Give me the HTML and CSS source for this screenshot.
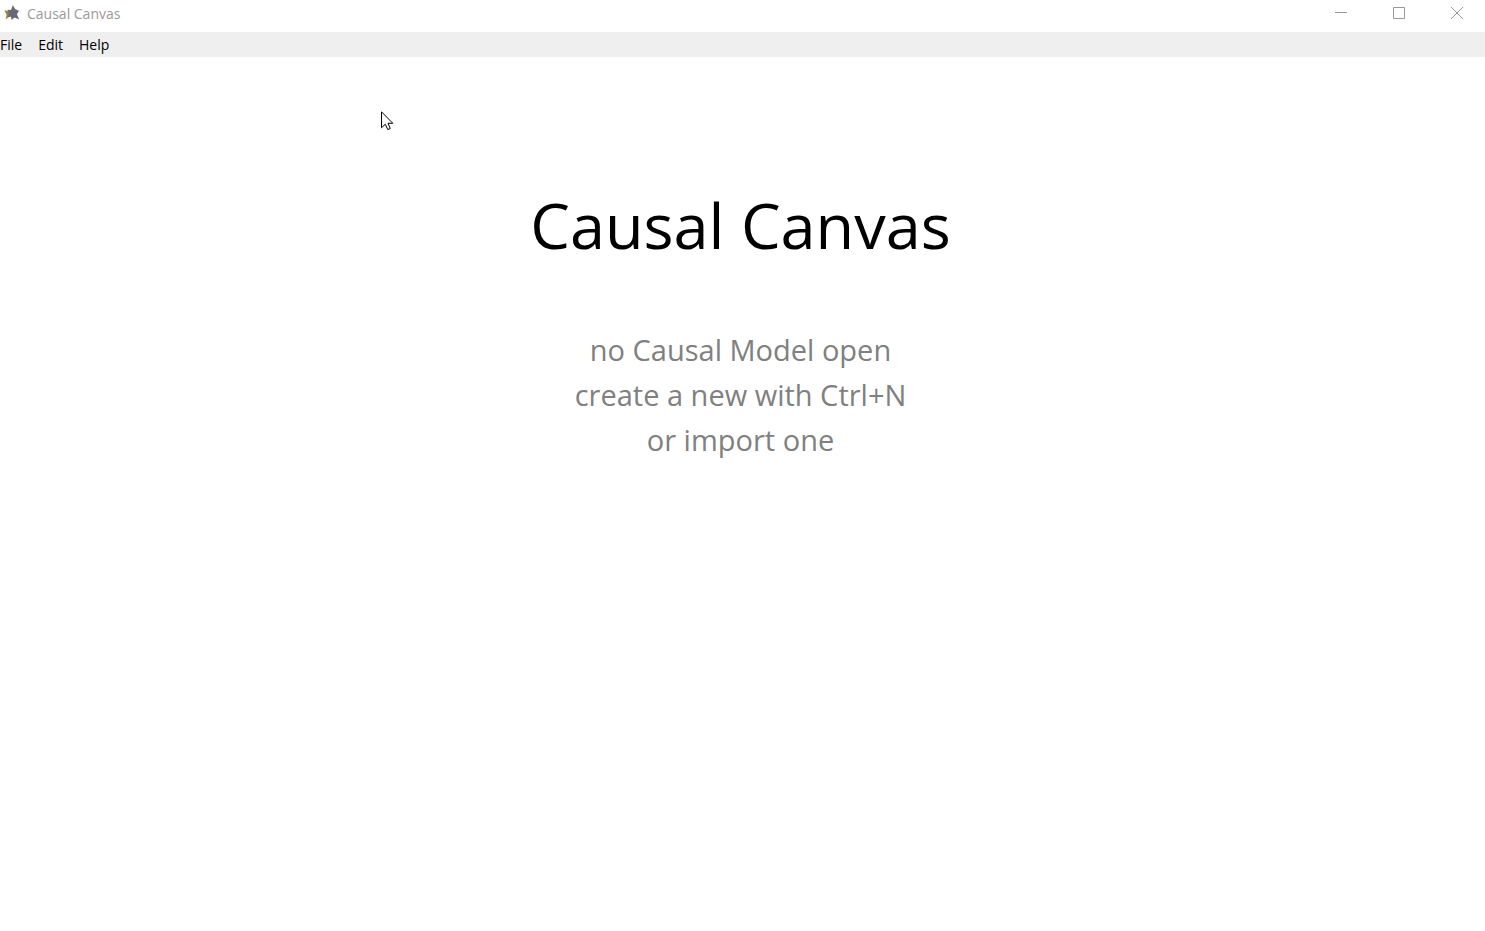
FILE: index.html
```
<!DOCTYPE html>
<html lang="en">
<head>
<meta charset="utf-8">
<title>Causal Canvas</title>
<link rel="stylesheet" href="styles.css">
</head>
<body>
<header class="titlebar">
  <svg class="app-icon" viewBox="0 0 16 16" aria-hidden="true">
    <path fill="#a48338" d="M.3 5.2L6 6.6 6 11.4 1.6 14.2l1-4.4z"/>
    <path fill="#817b79" d="M2.8 6.2l3.2.6-.6 4.4-1.8.6.6-3z"/>
    <path fill="#686877" d="M8.8.3l2.6 4 3.6 1.5-2.1 3.4L15.2 14.4l-4.5-2-3.2 2.6-.5-3.2-3.2.2 1.5-3.7-2-3.5L7 5z"/>
  </svg>
  <span class="app-name">Causal Canvas</span>
  <div class="window-controls">
    <button class="window-button" aria-label="Minimize"><svg viewBox="0 0 12 12"><path d="M0 5.5h12"/></svg></button>
    <button class="window-button" aria-label="Maximize"><svg viewBox="0 0 12 12"><path d="M.5.5h11v11H.5z"/></svg></button>
    <button class="window-button" aria-label="Close"><svg viewBox="0 0 12 12"><path d="M0 0l12 12M12 0L0 12"/></svg></button>
  </div>
</header>
<nav class="menubar" aria-label="Main menu">
  <button class="menu-item">File</button>
  <button class="menu-item">Edit</button>
  <button class="menu-item">Help</button>
</nav>
<main class="welcome">
  <h1 class="heading">Causal Canvas</h1>
  <p class="hint">no Causal Model open<br>create a new with Ctrl+N<br>or import one</p>
</main>
<svg class="pointer" viewBox="0 0 13 20" aria-hidden="true">
  <path fill="#fff" stroke="#000" d="M.5.8v16l3.8-3.6 2.5 5.4 2.5-1.1-2.3-5.2h4.8z"/>
</svg>
</body>
</html>
```
FILE: styles.css
```
* { box-sizing: border-box; }
body {
  margin: 0;
  min-height: 100vh;
  display: flex;
  flex-direction: column;
  background: #fff;
  color: #000;
  font-family: "Open Sans", sans-serif;
}
button {
  margin: 0;
  padding: 0;
  border: 0;
  background: none;
  color: inherit;
  font: inherit;
}
.titlebar {
  display: flex;
  align-items: flex-start;
  height: 32px;
  padding-left: 4px;
  color: #999;
  font-size: 14px;
  line-height: 20px;
}
.app-icon {
  width: 16px;
  height: 16px;
  margin-top: 5px;
}
.app-name {
  margin: 4px 0 0 7px;
}
.window-controls {
  display: flex;
  margin: 0 -1px 0 auto;
}
.window-button {
  display: flex;
  align-items: center;
  justify-content: center;
  width: 58px;
  height: 26px;
}
.window-button svg {
  width: 12px;
  height: 12px;
  overflow: visible;
  fill: none;
  stroke: #999;
}
.menubar {
  display: flex;
  gap: 16px;
  height: 25px;
  background: #efefef;
  font-size: 14px;
  line-height: 25px;
}
.welcome {
  flex: 1;
  padding: 123px 4px 0 0;
  text-align: center;
}
.heading {
  margin: 0;
  font-size: 63px;
  font-weight: 400;
  line-height: 90px;
}
.hint {
  margin: 57px 0 0;
  color: #808080;
  font-size: 29px;
  line-height: 45px;
}
.pointer {
  position: absolute;
  left: 381px;
  top: 111px;
  width: 13px;
  height: 20px;
}
```
